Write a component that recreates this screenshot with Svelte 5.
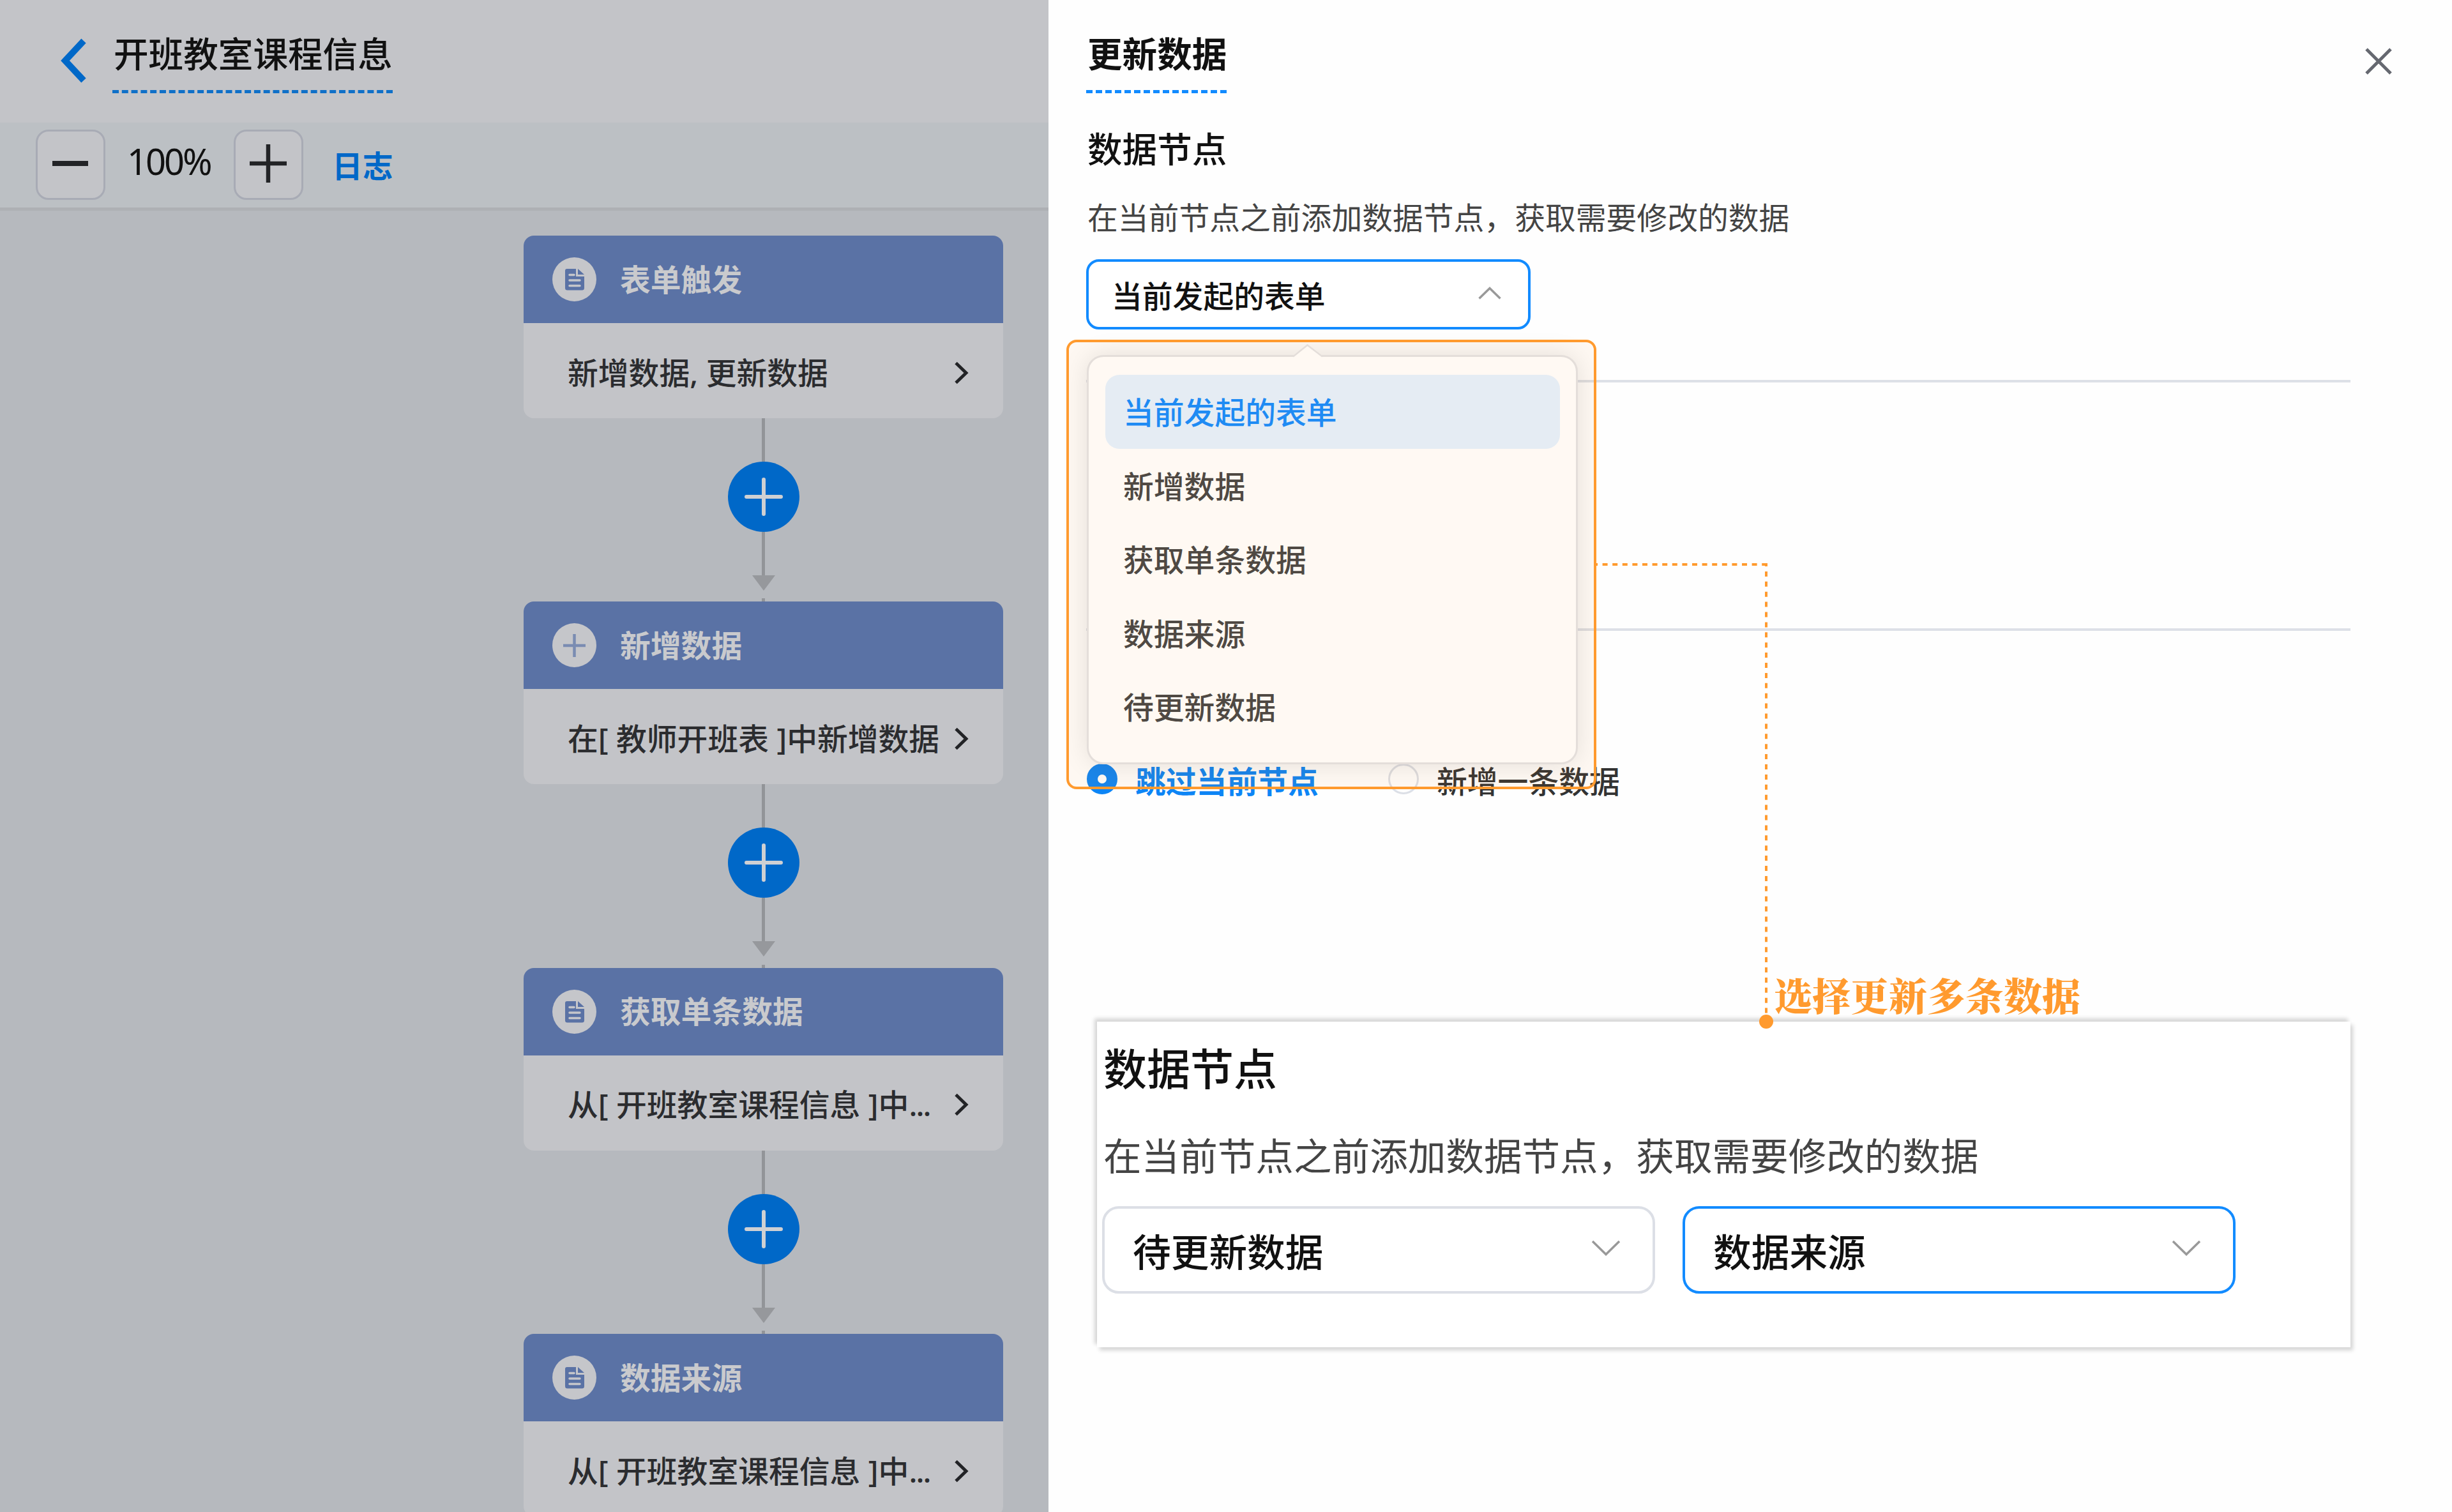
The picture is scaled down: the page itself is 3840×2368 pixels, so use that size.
<script>
  const nodes = [
    { id: 1, icon: 'doc', title: '表单触发', text: '新增数据, 更新数据' },
    { id: 2, icon: 'plus', title: '新增数据', text: '在[ 教师开班表 ]中新增数据' },
    { id: 3, icon: 'doc', title: '获取单条数据', text: '从[ 开班教室课程信息 ]中', more: true },
    { id: 4, icon: 'doc', title: '数据来源', text: '从[ 开班教室课程信息 ]中', more: true }
  ];

  const options = ['当前发起的表单', '新增数据', '获取单条数据', '数据来源', '待更新数据'];

  let selected = $state('当前发起的表单');
  let zoom = $state(100);
  let open = $state(true);
  let mode = $state('skip');
</script>

<div class="app">
  <div class="flow">
    <header class="flow-header">
      <svg class="back" viewBox="0 0 40 70"><path d="M36 4 L7 35 L36 66" /></svg>
      <h1 class="title">开班教室课程信息</h1>
    </header>

    <div class="toolbar">
      <button class="zoom-btn" aria-label="缩小" onclick={() => (zoom -= 10)}>
        <svg viewBox="0 0 62 62"><path d="M2 31 H58" stroke-width="8" /></svg>
      </button>
      <span class="percent">{zoom}%</span>
      <button class="zoom-btn" aria-label="放大" onclick={() => (zoom += 10)}>
        <svg viewBox="0 0 62 62"><path d="M1 31 H59 M30 1 V61" stroke-width="6.5" /></svg>
      </button>
      <span class="log">日志</span>
    </div>

    <div class="canvas">
      {#each nodes as node, i}
        <div class="node">
          <div class="node-head">
            <svg class="node-icon" viewBox="0 0 69 69">
              <circle cx="34.5" cy="34.5" r="34.5" fill="#c5c6ca" />
              {#if node.icon === 'doc'}
                <path d="M23 18 H37 V30 H50 V48 Q50 51.500 46.500 51.500 H23.500 Q20 51.500 20 48 V21 Q20 18 23 18 Z" fill="#5a72a5" />
                <path d="M40 18 L50 27 H40 Z" fill="#5a72a5" />
                <path d="M27 27.500 H34 M27 36 H43 M27 44.500 H43" stroke="#c5c6ca" stroke-width="3.500" stroke-linecap="round" />
              {:else}
                <path d="M17 35 H52 M34.500 17 V53" stroke="#7a8cb2" stroke-width="4.500" />
              {/if}
            </svg>
            <span>{node.title}</span>
          </div>
          <div class="node-body">
            <span>{node.text}{#if node.more}<span class="more">...</span>{/if}</span>
            <svg class="arrow" viewBox="0 0 24 36"><path d="M3 2.500 L19 18 L3 33.500" /></svg>
          </div>
        </div>
        {#if i < nodes.length - 1}
          <div class="link">
            <div class="line"></div>
            <svg class="add" viewBox="0 0 112 110">
              <ellipse cx="56" cy="55" rx="56" ry="55" fill="#0068c8" />
              <path d="M29 55 H83 M56 28 V82" stroke="#cfd0d3" stroke-width="6" stroke-linecap="round" />
            </svg>
            <div class="line"></div>
            <div class="tip"></div>
            <div class="stub"></div>
          </div>
        {/if}
      {/each}
    </div>
  </div>

  <div class="drawer">
    <div class="drawer-head">
      <h2 class="title bold">更新数据</h2>
      <svg class="close" viewBox="0 0 46 46"><path d="M4 4 L42 42 M42 4 L4 42" /></svg>
    </div>

    <h3 class="label">数据节点</h3>
    <p class="hint">在当前节点之前添加数据节点，获取需要修改的数据</p>

    <div class="picker">
      <button class="select active" onclick={() => (open = !open)}>
        <span>{selected}</span>
        <svg class="caret" viewBox="0 0 36 20"><path d="M1.500 18.500 L18 2.500 L34.500 18.500" /></svg>
      </button>
      {#if open}
        <div class="menu">
          <svg class="peak" viewBox="0 0 46 24"><path d="M0 20.500 L22.500 1.500 L46 20.500 V24 H0 Z" fill="#fff" /><path d="M0 19.500 L22.500 1.500 L46 19.500" fill="none" stroke="#e3e3e5" stroke-width="2.500" /></svg>
          {#each options as option}
            <button class="option" class:current={option === selected} onclick={() => (selected = option)}>{option}</button>
          {/each}
        </div>
      {/if}
    </div>

    <div class="rule first"></div>
    <div class="rule second"></div>

    <div class="radios">
      <label class="radio" class:on={mode === 'skip'}>
        <input type="radio" value="skip" bind:group={mode} />
        <i></i><span>跳过当前节点</span>
      </label>
      <label class="radio" class:on={mode === 'add'}>
        <input type="radio" value="add" bind:group={mode} />
        <i></i><span>新增一条数据</span>
      </label>
    </div>

    <section class="inset">
      <h3>数据节点</h3>
      <p>在当前节点之前添加数据节点，获取需要修改的数据</p>
      <div class="selects">
        <div class="select big">
          <span>待更新数据</span>
          <svg class="caret" viewBox="0 0 46 25"><path d="M2 2 L23 22.500 L44 2" /></svg>
        </div>
        <div class="select big active">
          <span>数据来源</span>
          <svg class="caret" viewBox="0 0 46 25"><path d="M2 2 L23 22.500 L44 2" /></svg>
        </div>
      </div>
    </section>

    <!-- callout drawn over the form -->
    <div class="frame"></div>
    <svg class="leader" viewBox="0 0 280 732">
      <path d="M0 4 H270" stroke-dasharray="8 7.600" stroke-dashoffset="4" />
      <path d="M268 2 V712" stroke-dasharray="8 7.900" stroke-dashoffset="3" />
      <circle cx="268" cy="720" r="11" fill="#ff9a2e" />
    </svg>
    <div class="note">选择更新多条数据</div>
  </div>
</div>

<style>
  :global(body) {
    margin: 0;
  }
  .app {
    display: flex;
    width: 3840px;
    height: 2368px;
    overflow: hidden;
    font-family: "Noto Sans", "Noto Sans CJK SC", sans-serif;
    font-size: 47.8px;
    color: #111;
  }
  h1, h2, h3, p {
    margin: 0;
    font-weight: 400;
  }
  button {
    font: inherit;
    color: inherit;
    padding: 0;
    margin: 0;
    text-align: left;
  }
  svg {
    display: block;
    flex: none;
  }
  span {
    white-space: nowrap;
  }

  /* flow side */
  .flow {
    width: 1642px;
    height: 2368px;
    flex: none;
    overflow: hidden;
    background: #b6b9be;
  }
  .flow-header {
    box-sizing: border-box;
    height: 192px;
    display: flex;
    align-items: flex-start;
    padding: 27px 0 0 95px;
    background: #c3c4c8;
  }
  .back {
    width: 40px;
    height: 70px;
    margin: 33px 41px 0 0;
  }
  .back path {
    fill: none;
    stroke: #0068c8;
    stroke-width: 10;
  }
  .title {
    font-size: 54.6px;
    font-weight: 500;
    line-height: 114px;
    white-space: nowrap;
    padding-left: 2px;
    border-bottom: 5px dashed #0f70c8;
  }
  .title.bold {
    font-weight: 700;
    border-color: #128bff;
  }
  .toolbar {
    box-sizing: border-box;
    height: 138px;
    display: flex;
    align-items: center;
    padding: 0 0 1px 56px;
    background: #bcc0c4;
    border-bottom: 5px solid #aeb0b4;
  }
  .zoom-btn {
    box-sizing: border-box;
    width: 109px;
    height: 110px;
    display: flex;
    align-items: center;
    justify-content: center;
    background: #c3c4c8;
    border: 3px solid #a8abb5;
    border-radius: 20px;
  }
  .zoom-btn svg {
    width: 62px;
    height: 62px;
    margin-top: -4px;
  }
  .zoom-btn path {
    stroke: #222326;
  }
  .percent {
    width: 167px;
    margin-left: 34px;
    font-size: 56px;
    line-height: 80px;
    letter-spacing: -3px;
    position: relative;
    top: -6px;
  }
  .log {
    margin-left: 45px;
    font-weight: 700;
    color: #0068c8;
    padding-bottom: 2px;
  }
  .canvas {
    padding: 39px 0 0 820px;
    width: 751px;
  }
  .node {
    border-radius: 16px;
    overflow: hidden;
    background: #c3c4c8;
  }
  .node-head {
    height: 137px;
    display: flex;
    align-items: center;
    padding-left: 45px;
    background: #5a72a5;
    color: #c9cacd;
    font-weight: 700;
  }
  .node-head span {
    padding-bottom: 5px;
  }
  .node-icon {
    width: 69px;
    height: 69px;
    margin-right: 37px;
  }
  .node-body {
    box-sizing: border-box;
    height: 149px;
    display: flex;
    align-items: center;
    justify-content: space-between;
    padding: 6px 53px 0 69px;
    color: #2b2c2f;
    font-weight: 500;
    line-height: 70px;
  }
  .more {
    letter-spacing: -2px;
  }
  .arrow {
    width: 24px;
    height: 36px;
  }
  .arrow path {
    fill: none;
    stroke: #222326;
    stroke-width: 5;
  }
  .link {
    height: 287.4px;
    display: flex;
    flex-direction: column;
    align-items: center;
  }
  .line {
    width: 5px;
    height: 68px;
    background: #929498;
  }
  .add {
    width: 112px;
    height: 110px;
  }
  .tip {
    border: 18px solid transparent;
    border-top: 24px solid #96989c;
    border-bottom: 0;
  }
  .stub {
    width: 5px;
    height: 5px;
    margin-top: auto;
    background: #929498;
  }

  /* drawer side */
  .drawer {
    position: relative;
    box-sizing: border-box;
    width: 2198px;
    height: 2368px;
    padding: 27px 159px 0 59px;
    background: #fefefe;
  }
  .drawer-head {
    display: flex;
    justify-content: space-between;
    align-items: flex-start;
  }
  .close {
    width: 46px;
    height: 46px;
    margin: 46px -67px 0 0;
  }
  .close path {
    stroke: #656870;
    stroke-width: 5;
  }
  .label {
    margin-top: 47px;
    padding-left: 2px;
    font-size: 54.6px;
    font-weight: 500;
    line-height: 80px;
  }
  .hint {
    margin-top: 38px;
    padding-left: 2px;
    line-height: 60px;
    color: #444;
    white-space: nowrap;
  }
  .picker {
    position: relative;
    width: 696px;
    margin-top: 35px;
  }
  .select {
    box-sizing: border-box;
    width: 100%;
    height: 110px;
    display: flex;
    align-items: center;
    justify-content: space-between;
    padding: 0 42px 0 36px;
    background: #fff;
    border: 4px solid #dcdfe6;
    border-radius: 20px;
    font-weight: 500;
  }
  .select.active {
    border-color: #128bff;
  }
  .caret {
    width: 36px;
    height: 20px;
    margin-top: -5px;
  }
  .caret path {
    fill: none;
    stroke: #999;
    stroke-width: 3.5;
  }
  .menu {
    position: absolute;
    z-index: 1;
    left: 1px;
    top: 150px;
    box-sizing: border-box;
    width: 769px;
    height: 641px;
    padding: 28px 25px 0 26px;
    background: #fff;
    border: 3px solid #e3e3e5;
    border-radius: 26px;
    box-shadow: 0 0 40px rgba(0, 0, 0, 0.1);
  }
  .peak {
    position: absolute;
    left: 320px;
    top: -20px;
    width: 46px;
    height: 24px;
  }
  .option {
    display: block;
    width: 100%;
    height: 115.5px;
    padding: 0 0 2px 28px;
    border: none;
    border-radius: 22px;
    background: none;
    color: #444;
    font-weight: 500;
  }
  .option.current {
    background: #e4f2ff;
    color: #128bff;
  }
  .rule {
    height: 4px;
    background: #dde0e7;
  }
  .rule.first {
    margin-top: 79px;
  }
  .rule.second {
    margin-top: 385px;
  }
  .radios {
    height: 48px;
    display: flex;
    align-items: center;
    margin-top: 208px;
    padding-left: 1px;
  }
  .radio {
    width: 472px;
    display: flex;
    align-items: center;
    color: #333;
    font-weight: 500;
  }
  .radio input {
    display: none;
  }
  .radio i {
    box-sizing: border-box;
    width: 48px;
    height: 48px;
    margin-right: 28px;
    border: 3px solid #dcdfe6;
    border-radius: 50%;
  }
  .radio span {
    line-height: 48px;
    padding-top: 7px;
  }
  .radio.on {
    color: #0d85f5;
    font-weight: 700;
  }
  .radio.on i {
    border: 17px solid #0d85f5;
    background: #fff;
  }
  .inset {
    box-sizing: border-box;
    height: 510px;
    margin: 356px 0 0 17px;
    padding: 29px 0 0 8px;
    background: #fff;
    box-shadow: -4px -5px 6px rgba(0, 0, 0, 0.16), 4px 5px 6px rgba(0, 0, 0, 0.16);
  }
  .inset h3 {
    padding-left: 2px;
    font-size: 68px;
    font-weight: 500;
    line-height: 90px;
  }
  .inset p {
    margin-top: 56px;
    padding-left: 2px;
    font-size: 59.6px;
    line-height: 70px;
    color: #444;
    white-space: nowrap;
  }
  .selects {
    display: flex;
    gap: 43px;
    margin-top: 44px;
  }
  .select.big {
    width: 866px;
    height: 137px;
    padding: 1px 50px 0 44px;
    border-radius: 26px;
    font-size: 59.7px;
  }
  .big .caret {
    width: 46px;
    height: 25px;
    margin-top: -7px;
  }

  .frame {
    position: absolute;
    z-index: 2;
    left: 28px;
    top: 532px;
    box-sizing: border-box;
    width: 830px;
    height: 704px;
    border: 4px solid #ff9a2e;
    border-radius: 16px;
    background: rgba(255, 154, 46, 0.06);
    pointer-events: none;
  }
  .leader {
    position: absolute;
    z-index: 2;
    left: 856px;
    top: 880px;
    width: 280px;
    height: 732px;
  }
  .leader path {
    fill: none;
    stroke: #ff9a2e;
    stroke-width: 4;
  }
  .note {
    position: absolute;
    z-index: 2;
    left: 1136px;
    top: 1512px;
    font-family: "Noto Serif CJK SC", "Source Han Serif SC", "Noto Sans CJK SC", serif;
    font-size: 60px;
    font-weight: 900;
    line-height: 90px;
    color: #ff9a2e;
    white-space: nowrap;
  }
</style>
